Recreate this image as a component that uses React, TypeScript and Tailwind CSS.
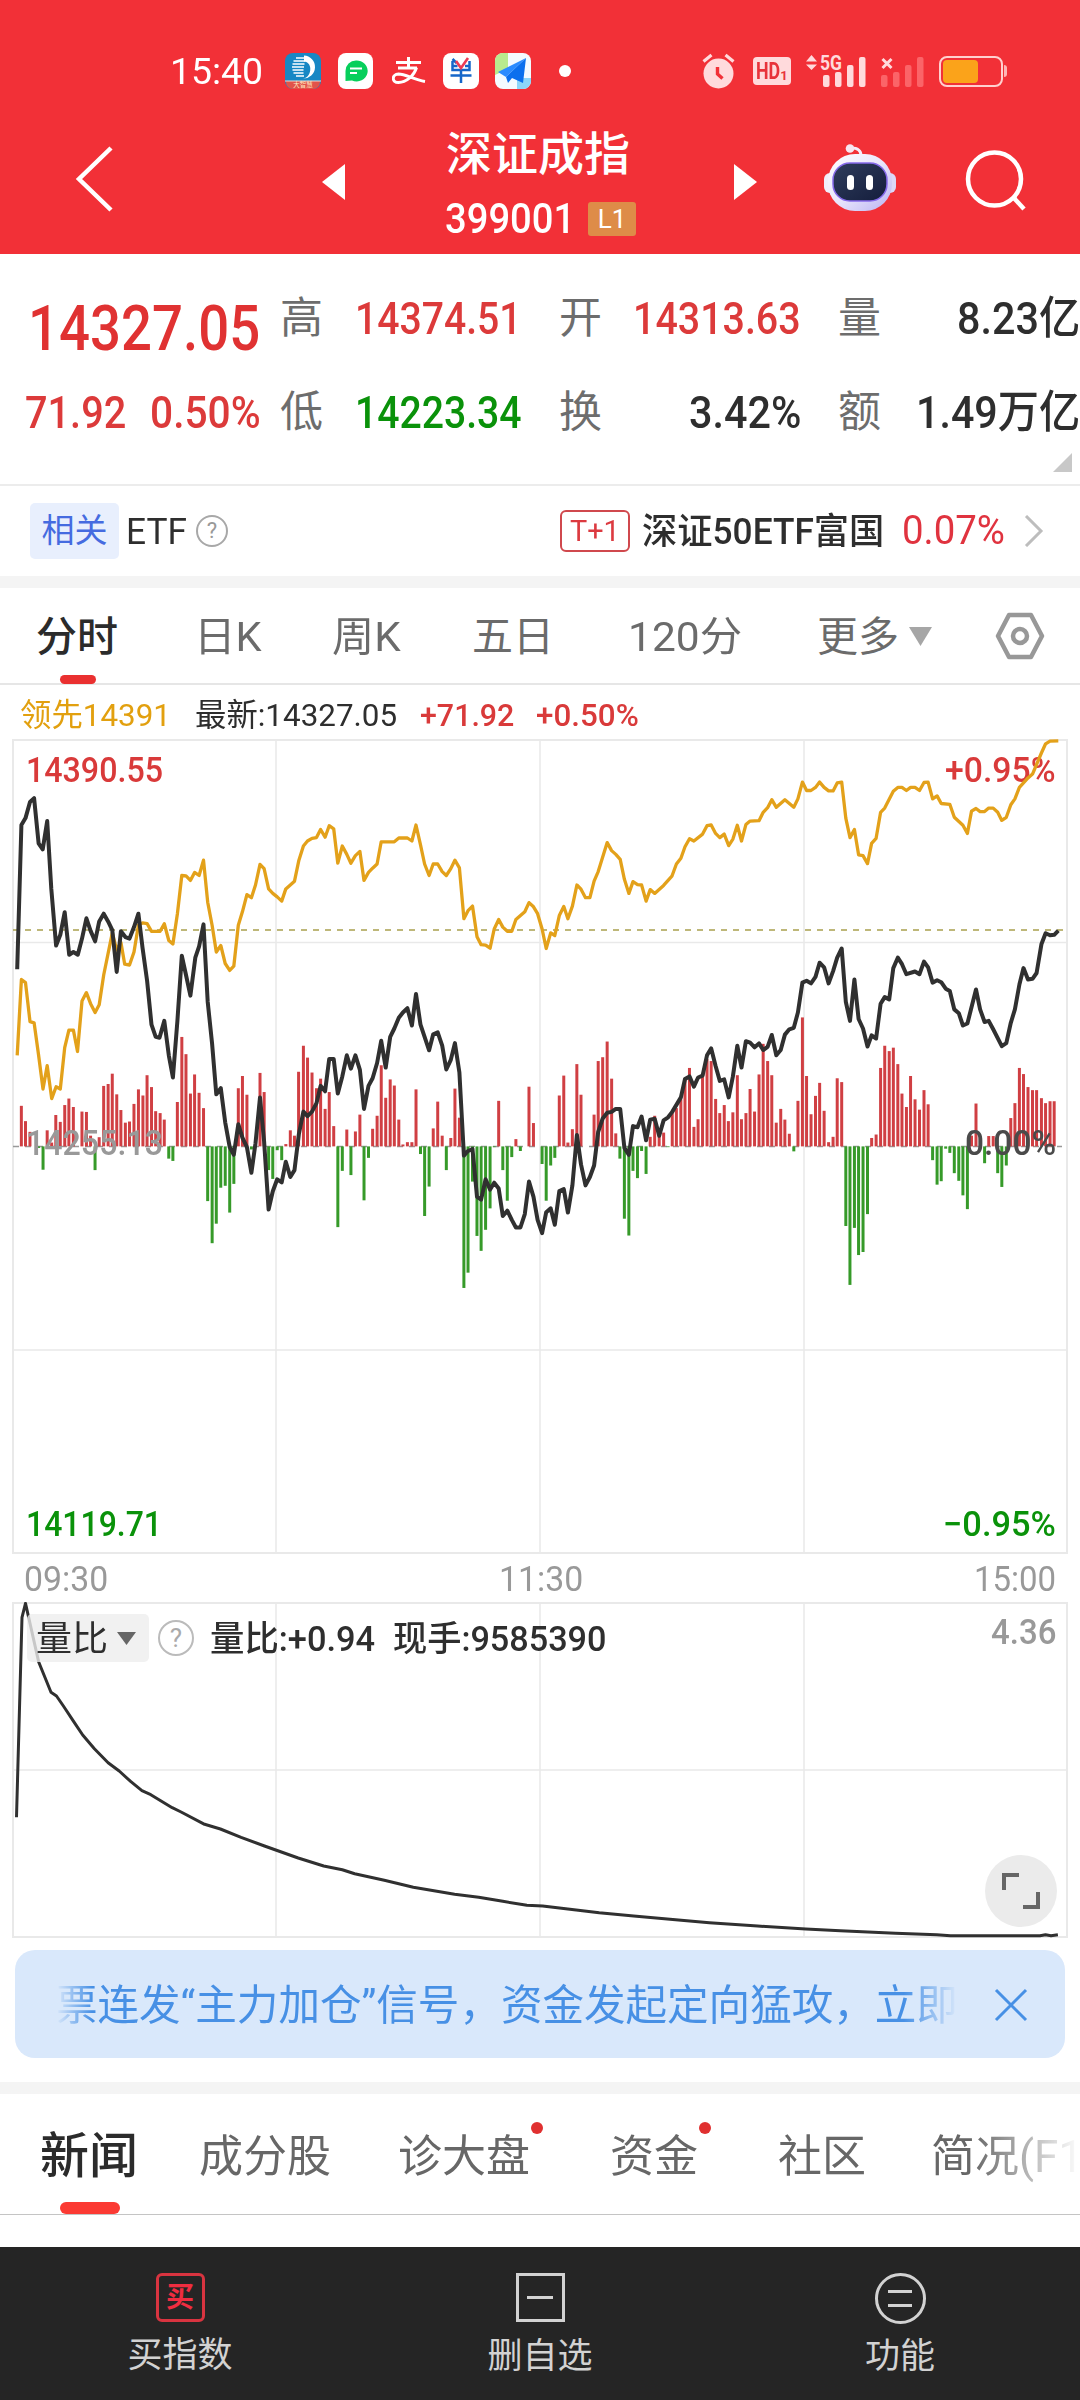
import { useLayoutEffect, useRef, useState } from 'react';
import type { ReactNode } from 'react';
import clsx from 'clsx';

type Point = [number, number];

const parse = (text: string, dx = 0): Point[] =>
  text
    .trim()
    .split(/\s+/)
    .map((pair) => {
      const [x, y] = pair.split(',').map(Number);
      return [x + dx, y];
    });

// Morning and afternoon sessions are stored apart, the second starts at HALF
const HALF = 1568;

const INDEX_LINE = [
  ...parse(`50,625 62,248 74,230 87,188 99,178 112,296 124,312 137,238 149,415 163,563 175,535 188,476 201,587 213,580
    226,587 238,545 251,492 263,525 276,552 288,500 301,480 314,500 326,523 339,632 351,526 364,541 376,545 389,515
    402,480 414,570 427,655 440,770 452,802 463,804 477,760 490,850 502,908 515,760 528,590 540,640 553,694 567,595
    578,565 591,508 603,710 616,820 628,952 641,936 654,1025 667,1090 679,1110 692,1030 704,1065 717,1090 730,1157
    742,1080 755,960 767,1075 780,1253 792,1205 805,1174 818,1182 830,1128 843,1168 855,1150 868,1055 881,997 893,1009
    906,997 919,975 931,930 944,944 956,860 969,860 981,950 994,905 1007,850 1019,885 1032,850 1045,888 1057,990
    1070,930 1082,910 1095,870 1107,812 1120,882 1133,802 1145,780 1158,752 1170,738 1183,727 1196,772 1208,690
    1221,770 1233,802 1246,837 1258,795 1271,790 1284,825 1296,887 1309,862 1321,818 1334,895 1347,1112 1359,1100
    1372,1095 1385,1220 1397,1227 1410,1174 1423,1201 1435,1183 1448,1198 1460,1270 1473,1256 1486,1280 1498,1300
    1511,1300 1524,1265 1536,1180 1549,1220 1561,1280`),
  ...parse(
    `6,1315 18,1260 31,1250 43,1293 56,1205 69,1200 81,1261 94,1190 107,1058 119,1135 132,1190 145,1168 157,1138
    169,1050 182,1015 195,1000 208,998 220,990 233,990 245,1092 258,1110 270,1035 283,1038 295,1010 308,1072 320,1018
    333,1016 346,1060 359,1020 372,1012 384,998 409,960 421,912 434,905 447,932 459,908 472,903 485,850 497,832
    510,878 522,917 535,913 548,960 560,905 573,825 585,882 598,813 610,817 623,829 636,819 648,836 661,828 673,797
    686,850 699,836 711,796 724,782 737,778 749,738 762,660 774,655 787,662 800,645 812,608 825,620 838,662 851,630
    863,595 876,571 888,710 900,760 913,652 925,755 938,780 951,827 963,798 976,806 989,715 1001,698 1014,704
    1026,622 1039,595 1051,612 1064,638 1089,631 1102,638 1115,605 1127,620 1140,660 1153,654 1165,659 1178,676
    1190,682 1203,730 1216,740 1228,772 1241,767 1266,678 1278,730 1291,763 1303,760 1316,782 1341,826 1354,818
    1367,765 1379,730 1392,665 1404,622 1417,652 1430,650 1442,635 1456,560 1468,531 1481,536 1493,535 1505,524`,
    HALF,
  ),
];

const LEAD_LINE = [
  ...parse(`50,850 62,652 74,660 87,762 99,765 112,850 125,938 137,877 150,963 163,932 175,938 188,830 200,784 213,784
    225,840 238,708 251,686 263,715 276,738 288,718 301,640 326,530 339,575 351,555 362,612 376,614 389,580 402,510
    414,504 427,506 440,526 465,526 477,506 490,550 502,559 515,480 528,380 540,381 553,393 565,372 578,380 591,340
    603,450 616,510 628,580 641,563 654,610 667,628 679,617 692,510 704,475 717,430 730,438 742,405 755,351 767,362
    780,415 792,427 805,436 818,447 830,415 843,405 855,395 868,340 881,303 893,290 906,283 919,281 931,260 944,280
    956,250 969,258 981,348 994,303 1007,325 1019,348 1032,328 1045,317 1057,393 1070,372 1082,361 1095,350 1107,292
    1145,292 1158,282 1183,282 1196,290 1208,248 1221,300 1233,350 1246,380 1258,350 1271,350 1284,370 1296,380
    1309,362 1321,340 1334,360 1347,493 1359,472 1372,460 1385,540 1397,561 1410,562 1423,570 1435,520 1448,495
    1460,515 1473,526 1486,526 1498,495 1524,475 1536,451 1549,462 1561,480`),
  ...parse(
    `6,520 18,571 31,530 43,537 56,485 69,461 81,493 94,460 107,405 119,416 132,438 145,438 157,395 169,370 182,332
    195,294 208,315 220,325 233,338 245,390 258,427 270,396 283,404 295,405 308,447 320,417 333,427 359,406 383,382
    396,350 409,335 421,305 434,284 447,290 472,272 485,250 497,248 510,270 522,281 535,272 548,302 560,285 573,249
    585,290 598,247 610,238 636,237 648,215 661,203 673,182 686,202 711,182 737,202 749,180 762,136 774,158 787,158
    800,150 812,136 825,150 838,159 851,159 863,138 876,136 888,230 900,281 913,260 925,326 938,328 951,349 963,296
    976,283 989,215 1001,204 1026,160 1039,150 1051,150 1064,158 1076,150 1089,150 1102,158 1115,137 1127,136
    1140,180 1153,172 1165,192 1190,194 1203,228 1228,249 1241,270 1253,212 1266,205 1278,213 1291,213 1303,204
    1316,204 1329,215 1341,236 1354,228 1367,195 1379,180 1392,150 1417,125 1430,115 1456,60 1468,36 1481,29 1505,28`,
    HALF,
  ),
];

const BARS = [
  ...parse(`62,982 74,1022 87,1050 112,1092 125,1149 137,1046 150,1078 162,1006 175,1024 188,980 200,963 213,985 238,997
    251,998 263,1060 276,1150 288,1064 301,930 314,925 326,898 339,952 351,993 364,1026 376,1023 389,977 402,939
    415,955 427,902 440,933 452,996 465,1001 477,1018 490,1120 502,1126 515,972 528,802 540,847 553,950 565,900
    578,948 591,988 603,1231 616,1341 628,1290 641,1196 654,1191 667,1261 679,1186 692,936 704,904 717,953 730,1096
    755,896 767,946 780,1150 792,1173 805,1098 818,1124 830,1082 843,1046 855,1060 867,893 881,825 893,856 906,895
    919,936 931,911 944,990 956,946 969,1035 981,1299 994,1152 1007,1044 1019,1163 1032,1049 1045,1005 1057,1229
    1070,1118 1082,1042 1095,1008 1107,876 1120,961 1133,913 1145,929 1158,1018 1170,1083 1183,1077 1196,1077
    1208,939 1221,1108 1233,1270 1246,1193 1258,1041 1271,971 1284,1060 1296,1150 1309,1066 1321,937 1334,1013
    1347,1458 1359,1418 1372,1180 1385,1322 1397,1361 1410,1306 1423,1250 1435,1090 1448,969 1460,1150 1473,1230
    1486,1116 1498,1069 1511,1100 1536,932 1549,1027`),
  ...parse(
    `6,1134 18,1230 31,1138 43,1118 56,955 69,903 81,1078 94,1043 107,873 119,953 157,1005 169,865 182,855 195,814
    208,911 220,1054 232,1120 245,1277 258,1321 270,1152 283,1171 295,1100 308,1160 320,1063 333,1008 346,1045
    359,1052 372,1090 384,1000 396,988 409,965 421,910 434,883 447,1037 459,1017 472,900 485,860 497,865 510,964
    522,1001 535,980 547,1022 560,999 573,902 585,1017 598,1001 610,938 623,997 636,900 648,820 661,865 673,902
    686,1026 699,990 711,1018 724,1055 737,1101 749,969 762,751 774,904 787,1004 800,956 812,922 825,995 838,1077
    851,1063 863,910 876,920 888,1296 900,1450 913,1301 925,1372 938,1364 951,1265 963,1066 976,1057 989,883
    1001,825 1014,839 1026,830 1039,873 1051,950 1064,985 1076,904 1089,965 1102,992 1115,941 1127,978 1140,1124
    1153,1188 1165,1179 1178,1094 1190,1105 1203,1158 1216,1178 1228,1216 1241,1252 1253,1060 1266,976 1291,1132
    1303,1061 1316,1061 1329,1158 1341,1194 1354,1138 1367,1014 1379,975 1392,883 1404,899 1417,933 1430,941
    1442,941 1456,962 1468,975 1481,970 1493,970`,
    HALF,
  ),
];

const RATIO_LINE = parse(`24,1012 32,412 37,370 56,545 74,637 82,648 92,678 108,728 120,765 137,806 157,848 173,873
  190,905 206,932 219,944 250,983 263,996 297,1033 320,1047 350,1072 384,1098 433,1134 470,1158 497,1169 515,1181
  558,1201 600,1222 660,1243 695,1252 730,1264 765,1276 788,1278 870,1298 920,1308 985,1320 1030,1328 1100,1338
  1170,1347 1220,1352 1300,1360 1360,1364 1380,1367 1510,1367 1518,1364 1526,1367 1536,1364`);

const px = (x: number) => x / 2.9037;
const py = (y: number) => (y - 26) / 2.6133 + 1;
const toPoints = (points: Point[]) => points.map(([x, y]) => `${px(x).toFixed(1)},${py(y).toFixed(1)}`).join(' ');

// Squeezes a line of text to the width of its box
function Fit({ className, children }: { className?: string; children: ReactNode }) {
  const box = useRef<HTMLDivElement>(null);
  const text = useRef<HTMLSpanElement>(null);
  const [scale, setScale] = useState(1);

  useLayoutEffect(() => {
    if (box.current && text.current) {
      setScale(box.current.clientWidth / text.current.offsetWidth);
    }
  }, []);

  return (
    <div ref={box} className={clsx('shrink-0 whitespace-nowrap', className)}>
      <span ref={text} className="inline-block origin-left" style={{ transform: `scaleX(${scale})` }}>
        {children}
      </span>
    </div>
  );
}

function StatusBar() {
  return (
    <div className="flex h-[98px] items-center pt-[44px] text-white">
      <Fit className="ml-[170px] w-[93px] text-[37px] leading-none">15:40</Fit>
      <svg className="ml-[22px] shrink-0" width="36" height="36" viewBox="0 0 36 36">
        <rect width="36" height="36" rx="8" fill="#1787c4" />
        <path d="M1 28h34v1a7 7 0 0 1-7 7H8a7 7 0 0 1-7-7z" fill="#e2534a" />
        <path d="M0 28h36" stroke="#e8d9d2" strokeWidth="1" />
        <path d="M19 2.500a11.500 11.500 0 1 1-1 23c8 0 11-16 1-17z" fill="#fff" />
        <path d="M11 5h8M8.500 8h12M7.500 11h12M7 14h12M7.500 17h11M8.500 20h10M11 23h8" stroke="#fff" strokeWidth="1.700" />
        <text x="18" y="34" textAnchor="middle" fontSize="6.500" fill="#ffe9c0">大智慧</text>
      </svg>
      <svg className="ml-[17px] shrink-0" width="35" height="36" viewBox="0 0 35 36">
        <rect width="35" height="36" rx="8" fill="#fff" />
        <path d="M18 7.500a11 10.500 0 1 1-4 20l-6.500.5V18A10.500 10.500 0 0 1 18 7.500z" fill="#07cf5b" />
        <path d="M12 15.500h12M12 20h7" stroke="#fff" strokeWidth="1.800" />
      </svg>
      <svg className="ml-[19px] shrink-0" width="34" height="28" viewBox="0 0 34 28" fill="none" stroke="#fff">
        <path d="M4 5.500h25M16.500 0v10M6 11h19" strokeWidth="3" />
        <path d="M24.500 10.500C22 19 14 25.500 6.500 25.500c-7 0-7-8 0-8.500 7 0 15 5.500 26.500 7.500" strokeWidth="3" />
      </svg>
      <svg className="ml-[17px] shrink-0" width="36" height="36" viewBox="0 0 36 36">
        <rect width="36" height="36" rx="8" fill="#fff" />
        <path d="M9.500 6l4 4M9.500 8v9h17V8M9.500 13h5M22 13h4M18 17v13M7.500 22.500h21" fill="none" stroke="#1566c9" strokeWidth="2.500" />
        <path d="M13 8l5 7 7-10" fill="none" stroke="#ec3c55" strokeWidth="2.600" />
      </svg>
      <svg className="ml-[16px] shrink-0" width="36" height="36" viewBox="0 0 36 36">
        <rect width="36" height="36" rx="8" fill="#f4faff" />
        <path d="M8 0h5v16L0 22V8a8 8 0 0 1 8-8z" fill="#b9ea8e" />
        <path d="M22 36V25h14v3a8 8 0 0 1-8 8z" fill="#8cd5fa" />
        <path d="M31 5L3 19l8 5z" fill="#2b8bff" />
        <path d="M31 5L11 24l2 6 4-5 11 5z" fill="#0b6fee" />
      </svg>
      <div className="ml-[28px] size-[12px] shrink-0 rounded-full bg-white" />
      <svg className="ml-[131px] shrink-0" width="34" height="36" viewBox="0 0 34 36">
        <circle cx="16.500" cy="20.500" r="15" fill="#ffdadc" />
        <path d="M1.500 8.500l8-6.500M31.500 8.500l-8-6.500" stroke="#ffdadc" strokeWidth="3.200" />
        <path d="M15.500 14v7l5 4.500" fill="none" stroke="#f23037" strokeWidth="3.400" />
      </svg>
      <div className="ml-[17px] flex h-[28px] w-[38px] shrink-0 items-center justify-center rounded-[4px] bg-[#ffdadc] text-[#e8323a]">
        <Fit className="w-[24px] text-[23px] leading-none font-bold">HD</Fit>
        <span className="pt-[8px] text-[13px] leading-none font-bold">1</span>
      </div>
      <svg className="ml-[15px] shrink-0 overflow-visible" width="60" height="34" viewBox="0 0 60 34" fill="#ffdadc">
        <path d="M0 7.500L5.500 1l5.500 6.500zM0 10.500L5.500 16 11 10.500z" />
        <text x="14" y="15.500" fontSize="20" fontWeight="700" textLength="22" lengthAdjust="spacingAndGlyphs">5G</text>
        <rect x="17" y="21" width="6.500" height="12" rx="2" />
        <rect x="29" y="18" width="6.500" height="15" rx="2" />
        <rect x="41" y="11" width="6.500" height="22" rx="2" />
        <rect x="53" y="3" width="6.500" height="30" rx="2" />
      </svg>
      <svg className="ml-[15px] shrink-0" width="44" height="34" viewBox="0 0 44 34" fill="#fb6468">
        <path d="M1.500 5l9 9M10.500 5l-9 9" stroke="#ffdadc" strokeWidth="3" />
        <rect x="0" y="21" width="6.500" height="12" rx="2" />
        <rect x="12" y="18" width="6.500" height="15" rx="2" />
        <rect x="24" y="11" width="6.500" height="22" rx="2" />
        <rect x="36" y="3" width="6.500" height="30" rx="2" />
      </svg>
      <div className="ml-[14px] h-[31px] w-[64px] shrink-0 rounded-[8px] border-[2.5px] border-[#ffd0cf] p-[2px]">
        <div className="h-full w-[35px] rounded-[4px] bg-[#fba31a]" />
      </div>
      <div className="ml-px h-[12px] w-[3px] rounded-r bg-[#ffb5b5]" />
    </div>
  );
}

function Robot() {
  return (
    <svg className="mt-[4px] ml-[67px] shrink-0" width="72" height="67" viewBox="0 0 72 67">
      <defs>
        <linearGradient id="head" x1="0" y1="0" x2="1" y2="1">
          <stop offset="0" stopColor="#ffffff" />
          <stop offset="0.500" stopColor="#e9e6fb" />
          <stop offset="1" stopColor="#b9b2f3" />
        </linearGradient>
        <linearGradient id="visor" x1="0" y1="0" x2="1" y2="1">
          <stop offset="0" stopColor="#2f3d5c" />
          <stop offset="1" stopColor="#141d3c" />
        </linearGradient>
      </defs>
      <path d="M27 4c7 0 10 2 10 8" fill="none" stroke="#f5ecfa" strokeWidth="3" />
      <circle cx="26" cy="4.500" r="4.300" fill="#f7e6f1" />
      <rect x="0" y="29" width="12" height="20" rx="6" fill="#f1effc" />
      <rect x="60" y="29" width="12" height="20" rx="6" fill="#dcd8f8" />
      <rect x="4" y="10" width="64" height="57" rx="27" fill="url(#head)" />
      <rect x="9" y="19" width="54" height="38" rx="17" fill="url(#visor)" stroke="#8569ea" strokeWidth="1.500" />
      <rect x="23" y="31" width="7" height="15" rx="3.500" fill="#fff" />
      <rect x="42" y="31" width="7" height="15" rx="3.500" fill="#fff" />
    </svg>
  );
}

function TitleBar() {
  return (
    <div className="flex h-[156px] items-center pb-[2px] text-white">
      <svg className="mt-[7px] ml-[75px] shrink-0" width="39" height="66" viewBox="0 0 39 66">
        <path d="M36 2L4 33l32 31" fill="none" stroke="#fff" strokeWidth="4.500" />
      </svg>
      <svg className="mt-[14px] ml-[208px] shrink-0" width="23" height="36" viewBox="0 0 23 36">
        <path d="M23 0v36L0 18z" fill="#fff" />
      </svg>
      <div className="mt-[21px] ml-[101px] w-[190px] shrink-0">
        <div className="text-[46px] leading-[66px] font-medium whitespace-nowrap">深证成指</div>
        <div className="flex h-[64px] items-center">
          <Fit className="-ml-px w-[130px] text-[42px] leading-none font-medium">399001</Fit>
          <div className="ml-[13px] flex h-[34px] w-[48px] items-center justify-center rounded-[3px] bg-[#de8c48] text-[26px] leading-none">
            L1
          </div>
        </div>
      </div>
      <svg className="mt-[14px] ml-[98px] shrink-0" width="23" height="36" viewBox="0 0 23 36">
        <path d="M0 0v36l23-18z" fill="#fff" />
      </svg>
      <Robot />
      <svg className="mt-[12px] ml-[69px] shrink-0" width="62" height="62" viewBox="0 0 62 62">
        <circle cx="29.500" cy="29" r="26.500" fill="none" stroke="#fff" strokeWidth="4.500" />
        <path d="M48 47l11 12" stroke="#fff" strokeWidth="4.500" />
      </svg>
    </div>
  );
}

function Cell({ label, children }: { label: string; children: ReactNode }) {
  return (
    <div className="flex w-[279px] shrink-0 items-center">
      <span className="text-[43px] leading-none text-[#6d6d6d]">{label}</span>
      <div className="ml-[31px] flex w-[168px] justify-end text-[45px] leading-none font-medium">{children}</div>
    </div>
  );
}

function Quote() {
  return (
    <div className="flex h-[230px] flex-col">
      <div className="mt-[34px] flex h-[60px] items-center">
        <Fit className="mt-[20px] ml-[28px] w-[232px] text-[63px] leading-none font-medium text-[#e03232]">14327.05</Fit>
        <div className="ml-[20px] flex">
          <Cell label="高">
            <Fit className="w-[167px] text-[#dc3a3a]">14374.51</Fit>
          </Cell>
          <Cell label="开">
            <Fit className="w-[168px] text-[#dc3a3a]">14313.63</Fit>
          </Cell>
          <div className="flex w-[242px] items-center justify-between">
            <span className="text-[43px] leading-none text-[#6d6d6d]">量</span>
            <Fit className="w-[123px] text-[45px] leading-none font-medium">8.23亿</Fit>
          </div>
        </div>
      </div>
      <div className="mt-[34px] flex h-[60px] items-center">
        <Fit className="mt-[2px] ml-[25px] w-[101px] text-[44px] leading-none font-medium text-[#dc3a3a]">71.92</Fit>
        <Fit className="mt-[2px] ml-[24px] w-[111px] text-[44px] leading-none font-medium text-[#dc3a3a]">0.50%</Fit>
        <div className="ml-[19px] flex">
          <Cell label="低">
            <Fit className="w-[167px] text-[#0a920a]">14223.34</Fit>
          </Cell>
          <Cell label="换">
            <Fit className="w-[112px]">3.42%</Fit>
          </Cell>
          <div className="flex w-[242px] items-center justify-between">
            <span className="text-[43px] leading-none text-[#6d6d6d]">额</span>
            <Fit className="w-[164px] text-[45px] leading-none font-medium">1.49万亿</Fit>
          </div>
        </div>
      </div>
      <svg className="mt-[11px] ml-[1053px]" width="19" height="19" viewBox="0 0 19 19">
        <path d="M19 0v19H0z" fill="#c8c8c8" />
      </svg>
    </div>
  );
}

function RelatedRow() {
  return (
    <div className="flex h-[92px] items-center border-t-2 border-[#ececec]">
      <div className="ml-[30px] flex h-[56px] w-[89px] shrink-0 items-center justify-center rounded-[5px] bg-[#e8effd] text-[33px] text-[#456be0]">
        相关
      </div>
      <Fit className="mt-[2px] ml-[7px] w-[61px] text-[37px]">ETF</Fit>
      <div className="ml-[9px] flex size-[32px] shrink-0 items-center justify-center rounded-full border-2 border-[#a8a8a8] text-[22px] leading-none text-[#999]">
        ?
      </div>
      <div className="ml-[332px] flex h-[42px] w-[70px] shrink-0 items-center justify-center rounded-[6px] border-2 border-[#d0484d]">
        <Fit className="w-[50px] text-[30px] leading-none text-[#dc3a40]">T+1</Fit>
      </div>
      <Fit className="mt-[2px] ml-[12px] w-[242px] text-[36px] font-medium">深证50ETF富国</Fit>
      <Fit className="ml-[18px] w-[103px] text-[41px] text-[#e0333f]">0.07%</Fit>
      <svg className="ml-[19px] shrink-0" width="20" height="32" viewBox="0 0 20 32">
        <path d="M2 1l15 15L2 31" fill="none" stroke="#bdbdbd" strokeWidth="3" />
      </svg>
    </div>
  );
}

function PeriodTabs() {
  return (
    <div className="flex h-[97px] items-center border-b-2 border-[#e6e6e6] pt-[5px] text-[41px] text-[#6b6b6b]">
      <div className="relative ml-[36px] w-[84px] shrink-0 font-medium text-[#2b2b2b]">
        分时
        <div className="absolute -bottom-[15px] left-[24px] h-[9px] w-[36px] rounded-full bg-[#ea3030]" />
      </div>
      <Fit className="ml-[74px] w-[68px]">日K</Fit>
      <Fit className="ml-[70px] w-[69px]">周K</Fit>
      <Fit className="ml-[71px] w-[82px]">五日</Fit>
      <Fit className="ml-[74px] w-[114px]">120分</Fit>
      <Fit className="ml-[75px] w-[82px]">更多</Fit>
      <svg className="mb-[4px] ml-[10px] shrink-0" width="23" height="19" viewBox="0 0 23 19">
        <path d="M0 0h23L11.500 19z" fill="#a6a6a6" />
      </svg>
      <svg className="mb-[4px] ml-[63px] shrink-0" width="50" height="48" viewBox="0 0 50 48">
        <path d="M14 3h22l11 21-11 21H14L3 24z" fill="none" stroke="#989898" strokeWidth="4.500" strokeLinejoin="round" />
        <circle cx="25" cy="24" r="7" fill="none" stroke="#989898" strokeWidth="4.500" />
      </svg>
    </div>
  );
}

function TrendChart() {
  return (
    <div className="relative h-[815px] text-[35px] leading-none font-medium">
      <svg className="block" width="1080" height="815" viewBox="0 0 1080 815" fill="none">
        <rect x="13" y="1" width="1054" height="813" stroke="#e9e9e9" strokeWidth="2" />
        <path d="M276 1v813M540 1v813M804 1v813" stroke="#e9e9e9" strokeWidth="1.500" />
        <path d="M13 203.500h1054M13 611h1054" stroke="#e9e9e9" strokeWidth="1.500" />
        <path d="M13 191h1054" stroke="#a9a04e" strokeWidth="1.500" strokeDasharray="6 6" />
        <path d="M13 407.500h1049" stroke="#999" strokeWidth="1.500" strokeDasharray="6 6" />
        {BARS.map(([x, y]) => (
          <path key={x} d={`M${px(x)} ${py(1088)}V${py(y)}`} stroke={y < 1088 ? '#d03f43' : '#369a29'} strokeWidth="3" />
        ))}
      </svg>
      <Fit className="absolute top-[14px] left-[26px] w-[137px] text-[#d93a3a]">14390.55</Fit>
      <Fit className="absolute top-[14px] left-[945px] w-[111px] text-[#d93a3a]">+0.95%</Fit>
      <Fit className="absolute top-[387px] left-[26px] w-[137px] text-[#999]">14255.13</Fit>
      <Fit className="absolute top-[387px] left-[965px] w-[91px] text-[#4a4a4a]">0.00%</Fit>
      <Fit className="absolute top-[768px] left-[26px] w-[136px] text-[#0a920a]">14119.71</Fit>
      <Fit className="absolute top-[768px] left-[943px] w-[113px] text-[#0a920a]">−0.95%</Fit>
      <svg className="absolute top-0 left-0" width="1080" height="815" viewBox="0 0 1080 815" fill="none">
        <polyline points={toPoints(LEAD_LINE)} stroke="#e3a11a" strokeWidth="3.300" strokeLinejoin="round" />
        <polyline points={toPoints(INDEX_LINE)} stroke="#303030" strokeWidth="4" strokeLinejoin="round" />
      </svg>
    </div>
  );
}

function RatioChart() {
  const points = RATIO_LINE.map(([x, y]) => `${(x / 1.4519).toFixed(1)},${((y - 369) / 3 + 1).toFixed(1)}`).join(' ');

  return (
    <div className="relative h-[336px] text-[35px] leading-none font-medium">
      <svg className="block" width="1080" height="336" viewBox="0 0 1080 336" fill="none">
        <rect x="13" y="1" width="1054" height="334" stroke="#e9e9e9" strokeWidth="2" />
        <path d="M276 1v334M540 1v334M804 1v334M13 168h1054" stroke="#e9e9e9" strokeWidth="1.500" />
        <polyline points={points} stroke="#303030" strokeWidth="3" strokeLinejoin="round" />
      </svg>
      <div className="absolute top-[12px] left-[27px] flex h-[48px] items-center text-[#2e2e2e]">
        <div className="flex h-full w-[122px] items-center rounded-[5px] bg-[#ededed]/80">
          <Fit className="mt-[2px] ml-[9px] w-[72px] font-normal">量比</Fit>
          <svg className="ml-[9px]" width="19" height="13" viewBox="0 0 19 13">
            <path d="M0 0h19L9.500 13z" fill="#666" />
          </svg>
        </div>
        <div className="mr-[16px] ml-[9px] flex size-[36px] items-center justify-center rounded-full border-2 border-[#bbb] text-[26px] font-normal text-[#aaa]">
          ?
        </div>
        <Fit className="mt-[2px] w-[165px]">量比:+0.94</Fit>
        <Fit className="mt-[2px] ml-[18px] w-[213px]">现手:9585390</Fit>
      </div>
      <Fit className="absolute top-[13px] left-[991px] w-[65px] text-[#999]">4.36</Fit>
      <div className="absolute top-[253px] left-[985px] flex size-[72px] items-center justify-center rounded-full bg-[#ebebeb]">
        <svg width="38" height="38" viewBox="0 0 38 38">
          <path d="M2 18V3h15M36 20v15H21" fill="none" stroke="#666" strokeWidth="4" />
        </svg>
      </div>
    </div>
  );
}

function Notice() {
  return (
    <div className="mx-[15px] mt-[12px] flex h-[108px] items-center rounded-[20px] bg-[#d9e8fb] pt-[2px] text-[42px] text-[#4790e5]">
      <div className="ml-[41px] w-[902px] shrink-0 overflow-hidden mask-r-from-94% mask-l-from-96%">
        <Fit className="w-[902px]">票连发“主力加仓”信号，资金发起定向猛攻，立即</Fit>
      </div>
      <svg className="ml-[36px]" width="34" height="34" viewBox="0 0 34 34">
        <path d="M2 2l30 30M32 2L2 32" stroke="#4790e5" strokeWidth="3" />
      </svg>
    </div>
  );
}

function NewsTab({ label, dot, className }: { label: string; dot?: boolean; className: string }) {
  return (
    <div className={clsx('relative shrink-0 whitespace-nowrap', className)}>
      {label}
      {dot && <div className="absolute top-[-2px] -right-[13px] size-[12px] rounded-full bg-[#e03030]" />}
    </div>
  );
}

function NewsTabs() {
  return (
    <div className="h-[121px] border-b border-[#c4c4c4]">
      <div className="flex h-[120px] items-center overflow-hidden pt-[6px] text-[44px] text-[#676767] mask-r-from-90%">
        <div className="relative ml-[40px] w-[98px] shrink-0 text-[49px] font-medium text-[#2b2b2b]">
          新闻
          <div className="absolute -bottom-[20px] left-[20px] h-[12px] w-[60px] rounded-full bg-[#fb3a33]" />
        </div>
        <NewsTab className="ml-[61px]" label="成分股" />
        <NewsTab className="ml-[67px]" label="诊大盘" dot />
        <NewsTab className="ml-[80px]" label="资金" dot />
        <NewsTab className="ml-[80px]" label="社区" />
        <NewsTab className="ml-[65px]" label="简况(F1" />
      </div>
    </div>
  );
}

function BottomBar() {
  return (
    <div className="grid h-[153px] grid-cols-3 bg-[#252525] pt-[26px] text-[35px] leading-none text-[#d2d2d2]">
      <div className="flex flex-col items-center">
        <div className="flex size-[49px] items-center justify-center rounded-[6px] border-3 border-[#d93440] text-[28px] font-bold text-[#f02d40]">
          买
        </div>
        <span className="mt-[16px]">买指数</span>
      </div>
      <div className="flex flex-col items-center">
        <div className="flex size-[49px] items-center justify-center border-3 border-[#d2d2d2]">
          <div className="h-[3px] w-[26px] bg-[#d2d2d2]" />
        </div>
        <span className="mt-[17px]">删自选</span>
      </div>
      <div className="flex flex-col items-center">
        <div className="flex size-[51px] flex-col items-center justify-center gap-[11px] rounded-full border-3 border-[#d2d2d2]">
          <div className="h-[3px] w-[24px] bg-[#d2d2d2]" />
          <div className="h-[3px] w-[24px] bg-[#d2d2d2]" />
        </div>
        <span className="mt-[15px]">功能</span>
      </div>
    </div>
  );
}

export default function App() {
  return (
    <div className="flex h-[2400px] w-[1080px] flex-col overflow-hidden bg-white font-[Roboto,'Noto_Sans_CJK_SC',sans-serif] text-[#2e2e2e]">
      <header className="h-[254px] shrink-0 bg-[#f23037]">
        <StatusBar />
        <TitleBar />
      </header>
      <Quote />
      <RelatedRow />
      <div className="h-[12px] shrink-0 bg-[#f4f4f4]" />
      <PeriodTabs />
      <div className="flex h-[54px] items-center pt-[5px] text-[32px]">
        <Fit className="ml-[20px] w-[151px] text-[#e2a00f]">领先14391</Fit>
        <Fit className="ml-[24px] w-[202px]">最新:14327.05</Fit>
        <Fit className="ml-[23px] w-[94px] font-medium text-[#d93a3a]">+71.92</Fit>
        <Fit className="ml-[22px] w-[103px] font-medium text-[#d93a3a]">+0.50%</Fit>
      </div>
      <TrendChart />
      <div className="flex h-[48px] items-center justify-between pt-[2px] pr-[24px] pl-[24px] text-[35px] leading-none text-[#999]">
        <Fit className="w-[84px]">09:30</Fit>
        <Fit className="w-[84px]">11:30</Fit>
        <Fit className="w-[82px]">15:00</Fit>
      </div>
      <RatioChart />
      <Notice />
      <div className="mt-[24px] h-[12px] shrink-0 bg-[#f4f4f4]" />
      <NewsTabs />
      <div className="flex-1" />
      <BottomBar />
    </div>
  );
}
